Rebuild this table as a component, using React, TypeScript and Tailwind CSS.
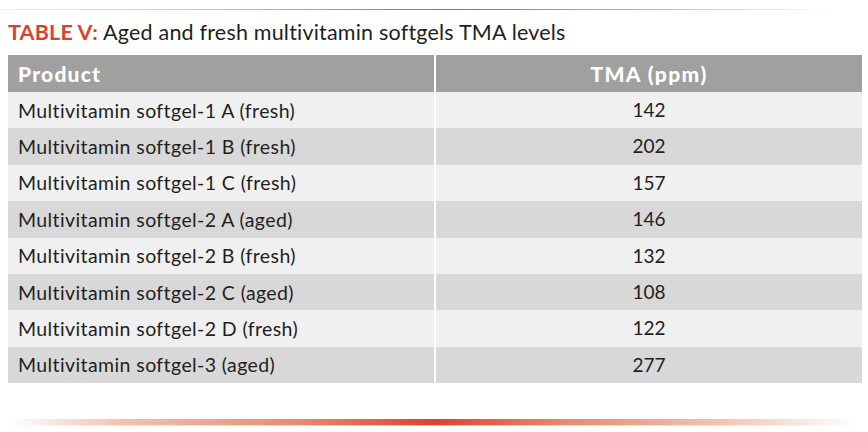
const rows: [string, string][] = [
  ['Multivitamin softgel-1 A (fresh)', '142'],
  ['Multivitamin softgel-1 B (fresh)', '202'],
  ['Multivitamin softgel-1 C (fresh)', '157'],
  ['Multivitamin softgel-2 A (aged)', '146'],
  ['Multivitamin softgel-2 B (fresh)', '132'],
  ['Multivitamin softgel-2 C (aged)', '108'],
  ['Multivitamin softgel-2 D (fresh)', '122'],
  ['Multivitamin softgel-3 (aged)', '277'],
];

export default function App() {
  return (
    <div className="w-[868px] h-[432px] bg-white overflow-hidden font-['Lato',sans-serif] [font-variant-ligatures:none] text-[#231f20]">
      <div className="pt-[9px]">
        <div className="h-px bg-[linear-gradient(to_right,#fce9e3_0%,#f3b3a4_25%,#e0503a_52%,#f0a696_75%,rgba(255,255,255,0)_96%)]" />
      </div>

      <div className="mt-[10px] px-[8px] h-[25px] leading-[25px] text-[21.5px] tracking-[0.2px]">
        <span className="font-bold text-[#d9432e]">TABLE V:</span>{' '}
        <span>Aged and fresh multivitamin softgels TMA levels</span>
      </div>

      <div className="mt-[10px] mx-[8px] w-[854px] grid grid-cols-[426px_426px] gap-x-[2px] bg-white">
        <div className="h-[37px] bg-[#a0a09e] flex items-center pl-[10px] text-white font-black text-[21px] tracking-[1.2px]">
          Product
        </div>
        <div className="h-[37px] bg-[#a0a09e] flex items-center justify-center text-white font-black text-[21px] tracking-[1.4px]">
          TMA (ppm)
        </div>
        {rows.map(([name, val], i) => {
          const bg = i % 2 === 0 ? 'bg-[#f0f0f0]' : 'bg-[#d8d8d8]';
          return [
            <div key={name} className={`h-[36.4px] ${bg} flex items-center pl-[10px] text-[19.5px] tracking-[0.4px]`}>
              {name}
            </div>,
            <div key={name + 'v'} className={`h-[36.4px] ${bg} flex items-center justify-center text-[19px]`}>
              {val}
            </div>,
          ];
        })}
      </div>

      <div className="mt-[36px] mx-[10px] w-[845px]">
        <div className="h-[6px] bg-[linear-gradient(to_right,rgba(255,255,255,0)_0%,#f3c6b4_12%,#e8876c_35%,#d9452e_50%,#e8876c_65%,#f3c6b4_85%,rgba(255,255,255,0)_100%)]" />
        <div className="h-px opacity-40 bg-[linear-gradient(to_right,rgba(255,255,255,0)_0%,#f3c6b4_12%,#e8876c_35%,#d9452e_50%,#e8876c_65%,#f3c6b4_85%,rgba(255,255,255,0)_100%)]" />
      </div>
    </div>
  );
}
